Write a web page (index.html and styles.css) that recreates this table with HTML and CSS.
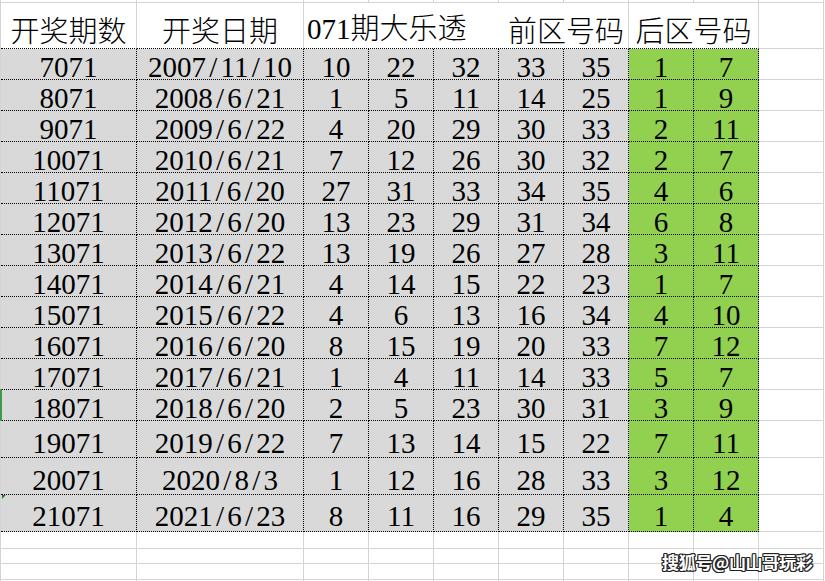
FILE: index.html
```html
<!DOCTYPE html>
<html lang="zh-CN">
<head>
<meta charset="utf-8">
<title>071期大乐透</title>
<link rel="stylesheet" href="styles.css">
</head>
<body>
<div class="sheet">
  <div class="grid">
    <!-- top strip -->
    <div class="c"></div><div class="c"></div><div class="c"></div><div class="c"></div><div class="c"></div>
    <div class="c"></div><div class="c"></div><div class="c"></div><div class="c"></div><div class="c"></div>

    <!-- header -->
    <div class="c h hb center"><span class="zh">开奖期数</span></div>
    <div class="c h hb center"><span class="zh">开奖日期</span></div>
    <div class="c h hb span5"><span class="h-left"><span lang="en">071</span><span class="zh">期大乐透</span></span><span class="zh">前区号码</span></div>
    <div class="c h hb span2 center"><span class="zh">后区号码</span></div>
    <div class="c h"></div>

    <!-- rows -->
    <div class="c d">7071</div><div class="c d">2007<i>/</i>11<i>/</i>10</div><div class="c d">10</div><div class="c d">22</div><div class="c d">32</div><div class="c d">33</div><div class="c d">35</div><div class="c d g">1</div><div class="c d g">7</div><div class="c"></div>
    <div class="c d">8071</div><div class="c d">2008<i>/</i>6<i>/</i>21</div><div class="c d">1</div><div class="c d">5</div><div class="c d">11</div><div class="c d">14</div><div class="c d">25</div><div class="c d g">1</div><div class="c d g">9</div><div class="c"></div>
    <div class="c d">9071</div><div class="c d">2009<i>/</i>6<i>/</i>22</div><div class="c d">4</div><div class="c d">20</div><div class="c d">29</div><div class="c d">30</div><div class="c d">33</div><div class="c d g">2</div><div class="c d g">11</div><div class="c"></div>
    <div class="c d">10071</div><div class="c d">2010<i>/</i>6<i>/</i>21</div><div class="c d">7</div><div class="c d">12</div><div class="c d">26</div><div class="c d">30</div><div class="c d">32</div><div class="c d g">2</div><div class="c d g">7</div><div class="c"></div>
    <div class="c d">11071</div><div class="c d">2011<i>/</i>6<i>/</i>20</div><div class="c d">27</div><div class="c d">31</div><div class="c d">33</div><div class="c d">34</div><div class="c d">35</div><div class="c d g">4</div><div class="c d g">6</div><div class="c"></div>
    <div class="c d">12071</div><div class="c d">2012<i>/</i>6<i>/</i>20</div><div class="c d">13</div><div class="c d">23</div><div class="c d">29</div><div class="c d">31</div><div class="c d">34</div><div class="c d g">6</div><div class="c d g">8</div><div class="c"></div>
    <div class="c d">13071</div><div class="c d">2013<i>/</i>6<i>/</i>22</div><div class="c d">13</div><div class="c d">19</div><div class="c d">26</div><div class="c d">27</div><div class="c d">28</div><div class="c d g">3</div><div class="c d g">11</div><div class="c"></div>
    <div class="c d">14071</div><div class="c d">2014<i>/</i>6<i>/</i>21</div><div class="c d">4</div><div class="c d">14</div><div class="c d">15</div><div class="c d">22</div><div class="c d">23</div><div class="c d g">1</div><div class="c d g">7</div><div class="c"></div>
    <div class="c d">15071</div><div class="c d">2015<i>/</i>6<i>/</i>22</div><div class="c d">4</div><div class="c d">6</div><div class="c d">13</div><div class="c d">16</div><div class="c d">34</div><div class="c d g">4</div><div class="c d g">10</div><div class="c"></div>
    <div class="c d">16071</div><div class="c d">2016<i>/</i>6<i>/</i>20</div><div class="c d">8</div><div class="c d">15</div><div class="c d">19</div><div class="c d">20</div><div class="c d">33</div><div class="c d g">7</div><div class="c d g">12</div><div class="c"></div>
    <div class="c d">17071</div><div class="c d">2017<i>/</i>6<i>/</i>21</div><div class="c d">1</div><div class="c d">4</div><div class="c d">11</div><div class="c d">14</div><div class="c d">33</div><div class="c d g">5</div><div class="c d g">7</div><div class="c"></div>
    <div class="c d sel">18071</div><div class="c d">2018<i>/</i>6<i>/</i>20</div><div class="c d">2</div><div class="c d">5</div><div class="c d">23</div><div class="c d">30</div><div class="c d">31</div><div class="c d g">3</div><div class="c d g">9</div><div class="c"></div>
    <div class="c d t">19071</div><div class="c d t">2019<i>/</i>6<i>/</i>22</div><div class="c d t">7</div><div class="c d t">13</div><div class="c d t">14</div><div class="c d t">15</div><div class="c d t">22</div><div class="c d t g">7</div><div class="c d t g">11</div><div class="c"></div>
    <div class="c d t">20071</div><div class="c d t">2020<i>/</i>8<i>/</i>3</div><div class="c d t">1</div><div class="c d t">12</div><div class="c d t">16</div><div class="c d t">28</div><div class="c d t">33</div><div class="c d t g">3</div><div class="c d t g">12</div><div class="c"></div>
    <div class="c d t2 err">21071</div><div class="c d t2">2021<i>/</i>6<i>/</i>23</div><div class="c d t2">8</div><div class="c d t2">11</div><div class="c d t2">16</div><div class="c d t2">29</div><div class="c d t2">35</div><div class="c d t2 g">1</div><div class="c d t2 g">4</div><div class="c"></div>

    <!-- empty rows -->
    <div class="c"></div><div class="c"></div><div class="c"></div><div class="c"></div><div class="c"></div>
    <div class="c"></div><div class="c"></div><div class="c"></div><div class="c"></div><div class="c"></div>
    <div class="c"></div><div class="c"></div><div class="c"></div><div class="c"></div><div class="c"></div>
    <div class="c"></div><div class="c"></div><div class="c"></div><div class="c"></div><div class="c"></div>
    <div class="c"></div><div class="c"></div><div class="c"></div><div class="c"></div><div class="c"></div>
    <div class="c"></div><div class="c"></div><div class="c"></div><div class="c"></div><div class="c"></div>
    <div class="c"></div><div class="c"></div><div class="c"></div><div class="c"></div><div class="c"></div>
    <div class="c"></div><div class="c"></div><div class="c"></div><div class="c"></div><div class="c"></div>
  </div>
  <div class="watermark">搜狐号@山山哥玩彩</div>
</div>
</body>
</html>
```

FILE: styles.css
```css
html, body {
  margin: 0;
  padding: 0;
  background: #ffffff;
}

.sheet {
  position: relative;
  width: 825px;
  height: 581px;
  overflow: hidden;
}

.grid {
  display: grid;
  grid-template-columns: 136px 167px repeat(8, 65px);
  grid-template-rows: 3px 46px repeat(12, 31px) 37px 37px 37px 17px 15px 16px 10px;
  border-left: 1px solid #d4d4d4;
  width: max-content;
  font-family: "Liberation Serif", "Times New Roman", "DejaVu Serif", serif;
  color: #000;
}

.zh {
  font-family: "Noto Sans CJK SC", "Noto Sans CJK JP", sans-serif;
  font-weight: 300;
}

.c {
  box-sizing: border-box;
  border-right: 1px solid #d4d4d4;
  border-bottom: 1px solid #d4d4d4;
  min-width: 0;
  position: relative;
}

/* header */
.h {
  display: flex;
  align-items: flex-end;
  font-size: 29px;
  line-height: 24px;
  padding-bottom: 7px;
  white-space: nowrap;
  background: #fff;
}
.h.center { justify-content: center; }
.hb { border-bottom: 1px dotted #000; }
.span5 {
  grid-column: span 5;
  justify-content: space-between;
  padding-left: 3px;
  padding-right: 4px;
}
.span2 { grid-column: span 2; }

/* data cells */
.d {
  display: flex;
  align-items: flex-end;
  justify-content: center;
  background: #d9d9d9;
  border-right: 1px dotted #000;
  border-bottom: 1px dotted #000;
  font-size: 29px;
  line-height: 24px;
  white-space: nowrap;
}
.d i {
  font-style: normal;
  display: inline-block;
  width: 14.5px;
  text-align: center;
}
.d.t { padding-bottom: 2px; }
.d.t2 { padding-bottom: 3px; }
.g { background: #92d050; }

/* excel selection marker on the row edge */
.sel::before {
  content: "";
  position: absolute;
  left: -1px;
  top: -1px;
  width: 2px;
  height: 32px;
  background: #3d9a4a;
}
/* excel error-indicator triangle */
.err::before {
  content: "";
  position: absolute;
  left: 1px;
  top: 0;
  width: 0;
  height: 0;
  border-top: 4px solid #2e7d32;
  border-right: 4px solid transparent;
}

.watermark {
  position: absolute;
  left: 662px;
  top: 551px;
  font-family: "Noto Sans CJK SC", sans-serif;
  font-size: 17px;
  line-height: 22px;
  font-weight: 700;
  color: #fff;
  letter-spacing: -0.3px;
  text-shadow:
    1px 0 0 #222, -1px 0 0 #222, 0 1px 0 #222, 0 -1px 0 #222,
    1px 1px 0 #222, -1px -1px 0 #222, 1px -1px 0 #222, -1px 1px 0 #222;
}
```
